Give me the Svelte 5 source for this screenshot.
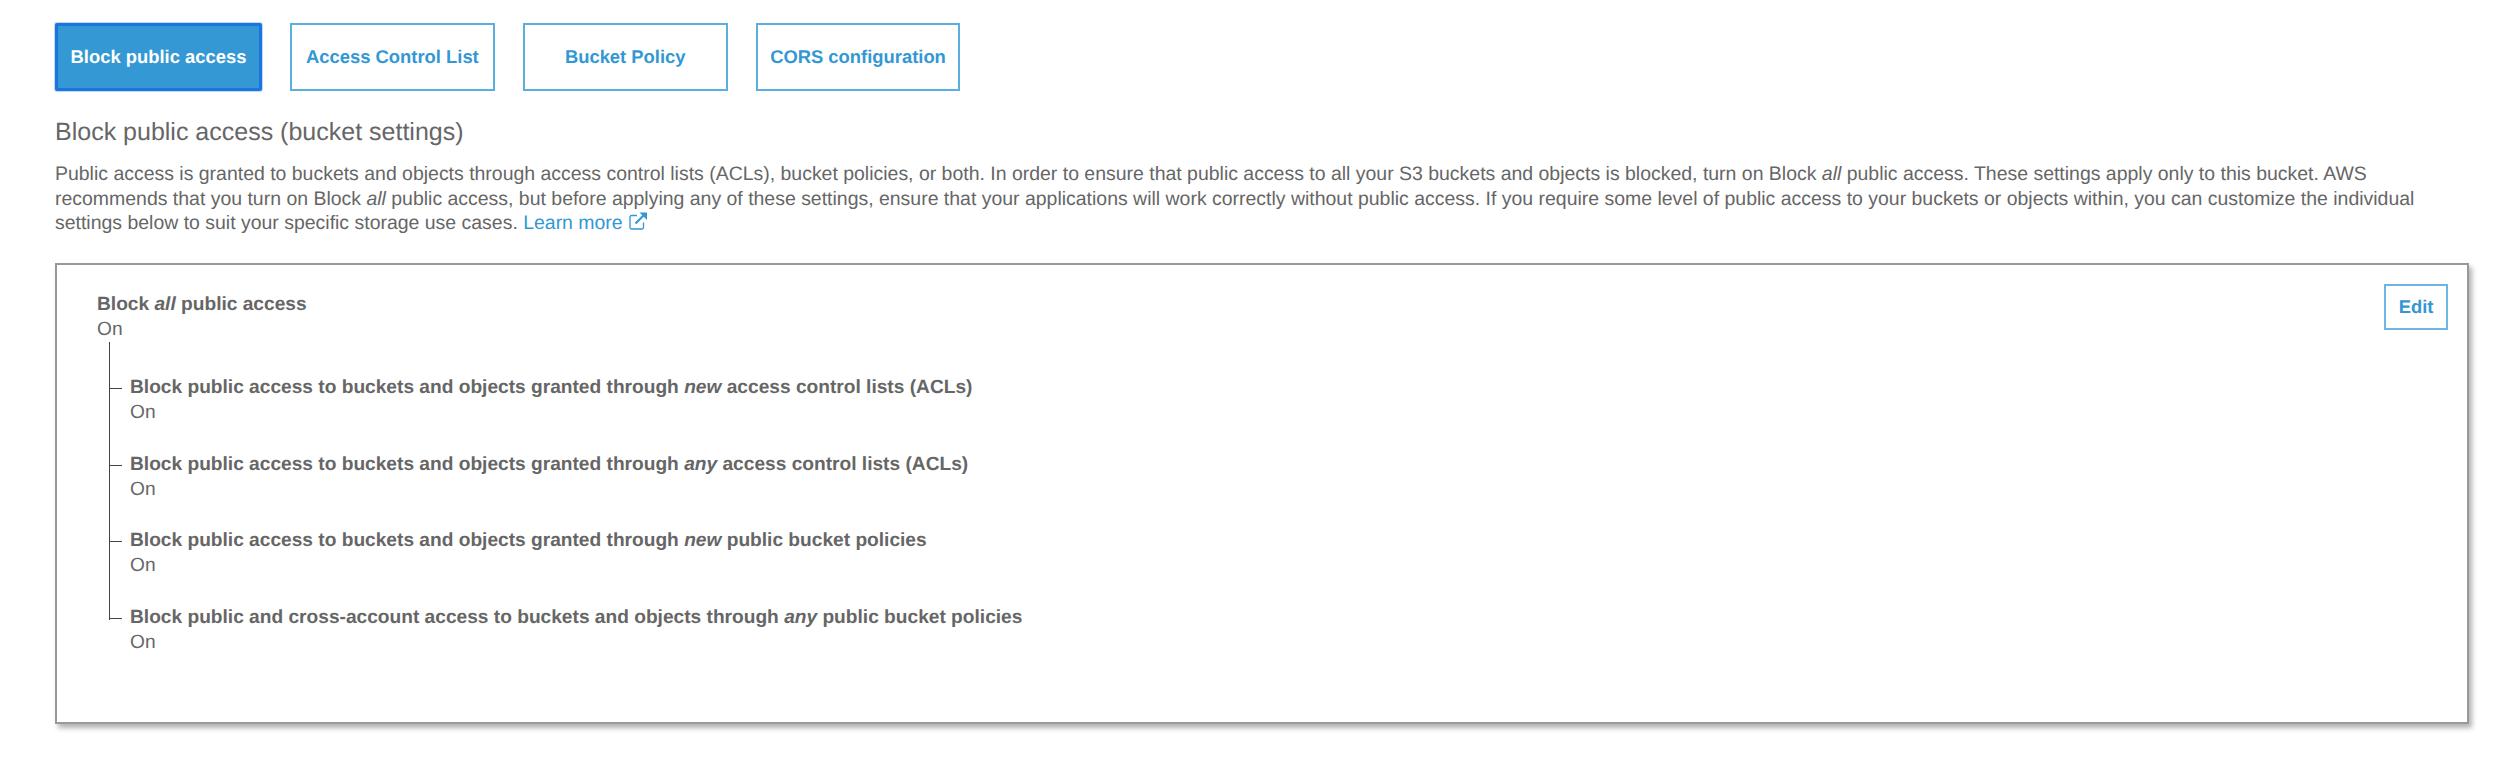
<script lang="ts">
	const tabs = ['Block public access', 'Access Control List', 'Bucket Policy', 'CORS configuration'];
	let active = $state(0);

	const settings = [
		{ before: 'Block public access to buckets and objects granted through ', word: 'new', after: ' access control lists (ACLs)' },
		{ before: 'Block public access to buckets and objects granted through ', word: 'any', after: ' access control lists (ACLs)' },
		{ before: 'Block public access to buckets and objects granted through ', word: 'new', after: ' public bucket policies' },
		{ before: 'Block public and cross-account access to buckets and objects through ', word: 'any', after: ' public bucket policies' }
	];
</script>

<main class="page">
	<nav class="tabs">
		{#each tabs as tab, index}
			<button class="tab" class:active={index === active} onclick={() => (active = index)}>{tab}</button>
		{/each}
	</nav>

	<h2>Block public access (bucket settings)</h2>
	<p class="intro">
		Public access is granted to buckets and objects through access control lists (ACLs), bucket policies, or both. In order to ensure that public access to all your S3 buckets and objects is blocked, turn on Block <em>all</em> public access. These settings apply only to this bucket. AWS recommends that you turn on Block <em>all</em> public access, but before applying any of these settings, ensure that your applications will work correctly without public access. If you require some level of public access to your buckets or objects within, you can customize the individual settings below to suit your specific storage use cases.
		<a href="#learn">Learn more
			<svg class="external" viewBox="0 0 20 20" width="20" height="20" aria-hidden="true">
				<path d="M15.5 11.5v5a1.5 1.5 0 0 1-1.5 1.5H3.5A1.5 1.5 0 0 1 2 16.500V6a1.500 1.500 0 0 1 1.500-1.500H9" fill="none" stroke="currentColor" stroke-width="1.300" />
				<path d="M7.500 12.500 16 4" fill="none" stroke="currentColor" stroke-width="2.200" />
				<path d="M11.500 1.500H19V9z" fill="currentColor" />
			</svg>
		</a>
	</p>

	<section class="card">
		<button class="edit">Edit</button>
		<div class="setting">
			<strong>Block <em>all</em> public access</strong>
			<span>On</span>
		</div>
		<ul class="tree">
			{#each settings as item}
				<li class="setting">
					<strong>{item.before}<em>{item.word}</em>{item.after}</strong>
					<span>On</span>
				</li>
			{/each}
		</ul>
	</section>
</main>

<style>
	:global(body) { margin: 0; background: #fff; }
	.page { padding: 23px 31px 0 55px; height: 737px; color: #666; font-family: "Liberation Sans", Arial, sans-serif; font-size: 19.47px; text-rendering: geometricPrecision; }
	.tabs { display: flex; gap: 28px; }
	.tab { box-sizing: border-box; width: 204.8px; height: 68px; padding: 0; border: 2px solid #5aaee0; border-radius: 0; background: #fff; color: #3397d3; font-family: inherit; font-size: 18.4px; font-weight: 700; text-rendering: inherit; cursor: pointer; }
	.tab.active { width: 207px; border: 3px solid #1a75e0; border-radius: 2px; background: #3498d4; color: #fff; box-shadow: 0 0 0 1px #c3dcf5; }
	h2 { margin: 26px 0 0; color: #666; font-size: 25px; font-weight: 400; line-height: 30px; }
	.intro { margin: 15px 0 0; color: #666; line-height: 24.7px; }
	.intro a { color: #3397d3; text-decoration: none; }
	.external { vertical-align: -2px; }
	.card { position: relative; box-sizing: border-box; height: 461px; margin-top: 27px; padding: 27px 40px; border: 2px solid #999; background: #fff; box-shadow: 3px 4px 5px rgba(0, 0, 0, .3); }
	.edit { position: absolute; top: 19px; right: 19px; box-sizing: border-box; width: 64px; height: 46px; padding: 0; border: 2px solid #6db6e4; background: #fff; color: #3397d3; font-family: inherit; font-size: 18.4px; font-weight: 700; text-rendering: inherit; cursor: pointer; }
	.setting { display: flex; flex-direction: column; font-size: 19.15px; line-height: 25px; }
	.setting strong { font-weight: 700; }
	.setting span { color: #666; }
	.tree { position: relative; margin: 0; padding: 33px 0 0 33px; list-style: none; }
	.tree::before { position: absolute; top: 0; bottom: 35px; left: 12px; width: 1px; content: ''; background: #444; }
	.tree li { position: relative; margin-bottom: 26.500px; }
	.tree li::before { position: absolute; top: 13px; left: -21px; width: 13px; height: 1px; content: ''; background: #444; }
</style>
